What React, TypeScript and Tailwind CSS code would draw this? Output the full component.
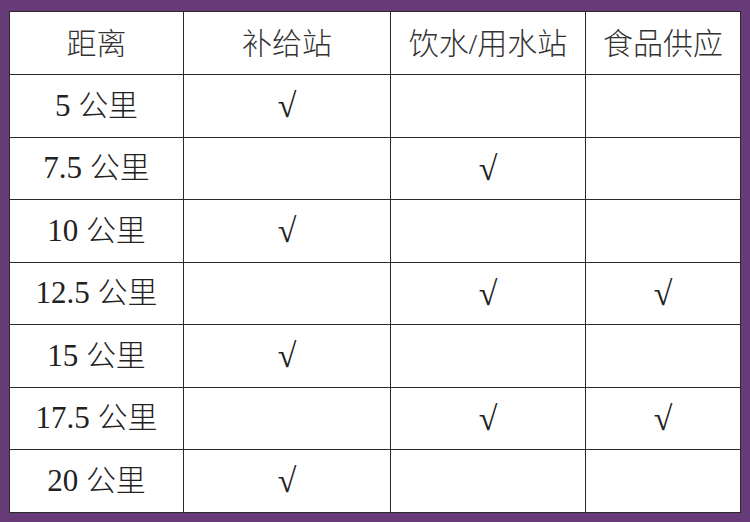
import React from "react";

const rows: [string, boolean, boolean, boolean][] = [
  ["5", true, false, false],
  ["7.5", false, true, false],
  ["10", true, false, false],
  ["12.5", false, true, true],
  ["15", true, false, false],
  ["17.5", false, true, true],
  ["20", true, false, false],
];

const cell = "border-[1.5px] border-[#2a2a2a] text-center align-middle p-0";

export default function App() {
  return (
    <div
      className="w-[750px] h-[522px] bg-[#673a78] pt-[11px] pl-[9px]"
      style={{ fontFamily: '"Liberation Serif", "Noto Sans CJK SC", serif' }}
    >
      <table className="bg-white border-collapse w-[731px] h-[500px] text-[#222] text-[30px] table-fixed">
        <colgroup>
          <col className="w-[174px]" />
          <col className="w-[207px]" />
          <col className="w-[195px]" />
          <col className="w-[155px]" />
        </colgroup>
        <tbody>
          <tr className="h-[63px]">
            <td className={`${cell} text-[#333] font-light`}>距离</td>
            <td className={`${cell} text-[#333] font-light`}>补给站</td>
            <td className={`${cell} text-[#333] font-light`}>饮水/用水站</td>
            <td className={`${cell} text-[#333] font-light`}>食品供应</td>
          </tr>
          {rows.map(([d, a, b, c]) => (
            <tr key={d} className="h-[62.5px]">
              <td className={`${cell} font-light`}>
                <span className="text-[31px] font-normal">{d} </span>
                <span>公里</span>
              </td>
              <td className={`${cell} text-[34px]`}>{a ? "√" : ""}</td>
              <td className={`${cell} text-[34px]`}>{b ? "√" : ""}</td>
              <td className={`${cell} text-[34px]`}>{c ? "√" : ""}</td>
            </tr>
          ))}
        </tbody>
      </table>
    </div>
  );
}
